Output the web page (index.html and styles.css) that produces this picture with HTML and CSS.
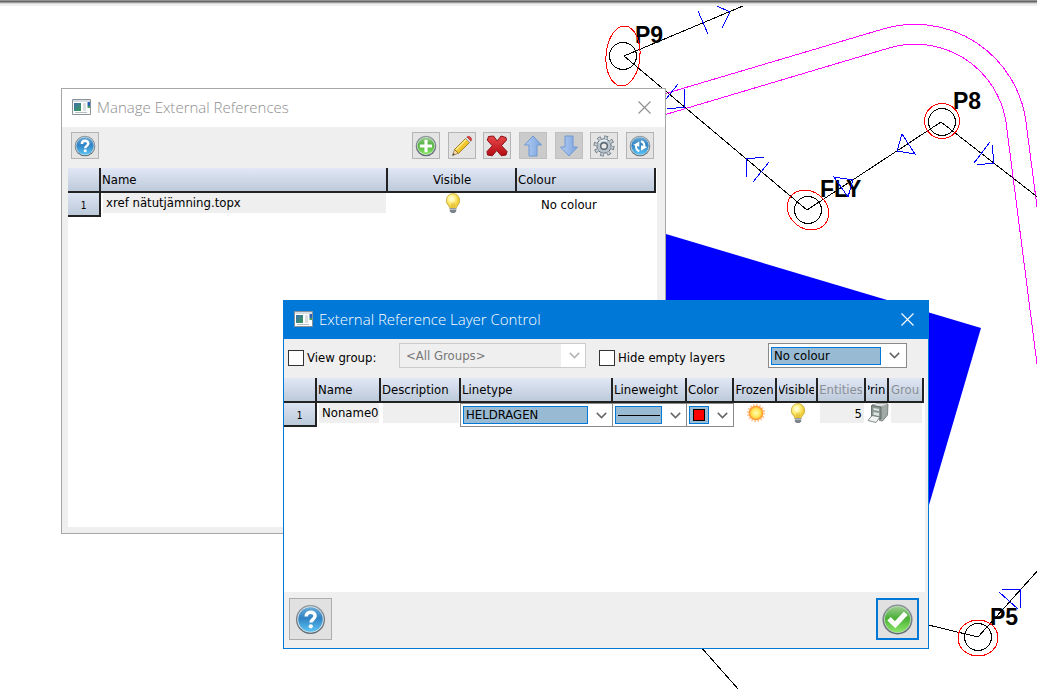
FILE: index.html
```html
<!DOCTYPE html>
<html lang="en">
<head>
<meta charset="utf-8">
<title>External references</title>
<link rel="stylesheet" href="styles.css">
</head>
<body>
<svg class="defs" width="0" height="0" aria-hidden="true">
  <defs>
    <linearGradient id="blueBall" x1="0" y1="0" x2="0" y2="1"><stop offset="0" stop-color="#6aaad6"/><stop offset=".45" stop-color="#3083c4"/><stop offset="1" stop-color="#5cc4f4"/></linearGradient>
    <linearGradient id="greenBall" x1="0" y1="0" x2="0" y2="1"><stop offset="0" stop-color="#9acb90"/><stop offset=".45" stop-color="#4bb036"/><stop offset="1" stop-color="#8ae668"/></linearGradient>
    <linearGradient id="rim" x1="0" y1="0" x2="0" y2="1"><stop offset="0" stop-color="#8e979c"/><stop offset="1" stop-color="#5e6970"/></linearGradient>
    <linearGradient id="redX" x1="0" y1="0" x2="0" y2="1"><stop offset="0" stop-color="#e8484a"/><stop offset="1" stop-color="#b40c12"/></linearGradient>
    <linearGradient id="arrow" x1="0" y1="0" x2="1" y2="0"><stop offset="0" stop-color="#b4cdf2"/><stop offset="1" stop-color="#7ba4df"/></linearGradient>
    <radialGradient id="bulbGlow" cx=".4" cy=".35"><stop offset="0" stop-color="#fffff0"/><stop offset=".5" stop-color="#fff38a"/><stop offset="1" stop-color="#f0cf3c"/></radialGradient>
    <radialGradient id="sunGlow"><stop offset="0" stop-color="#fffbb0"/><stop offset=".6" stop-color="#ffe75c"/><stop offset="1" stop-color="#ffb02a"/></radialGradient>
    <linearGradient id="picture" x1="0" y1="0" x2="1" y2="1"><stop offset="0" stop-color="#3c6fb0"/><stop offset="1" stop-color="#3c9a55"/></linearGradient>
    <symbol id="app" viewBox="0 0 19 16">
      <path d="M.5.5h18v15H.5z" fill="#fff" stroke="#8a9298"/><path d="M1 1h17v2H1z" fill="#d7dde2"/>
      <path d="M2 4h7v8H2z" fill="url(#picture)"/><path d="M11 5h3M11 7h3M11 9h3M11 11h3M3 13.5h12" stroke="#b8bec4"/><path d="M15.500 3h2.500v4h-2.500z" fill="#2a62b8"/><path d="M15.500 7h2.500v2h-2.500z" fill="#4aa05a"/>
    </symbol>
    <symbol id="help" viewBox="0 0 32 32">
      <circle cx="16" cy="16" r="15" fill="url(#rim)"/><circle cx="16" cy="16" r="13.600" fill="#d5e2ea"/><circle cx="16" cy="16" r="12.600" fill="url(#blueBall)"/>
      <path d="M11.500 13c0-6 9.200-5.800 9.200-.6 0 3.400-4.300 3.500-4.300 6.800" fill="none" stroke="#fff" stroke-width="3.600"/><circle cx="16.300" cy="23" r="2.200" fill="#fff"/>
    </symbol>
    <symbol id="add" viewBox="0 0 32 32">
      <circle cx="16" cy="16" r="15" fill="url(#rim)"/><circle cx="16" cy="16" r="13" fill="#d4ecce"/><circle cx="16" cy="16" r="12" fill="url(#greenBall)"/><path d="M16 7v18M7 16h18" stroke="#fff" stroke-width="4.500"/>
    </symbol>
    <symbol id="check" viewBox="0 0 32 32">
      <circle cx="16" cy="16" r="15.500" fill="url(#rim)"/><circle cx="16" cy="16" r="13.900" fill="#b9dcae"/><circle cx="16" cy="16" r="13" fill="url(#greenBall)"/><path d="M5.500 17l3.500-3.500 4.300 4.300L22.500 8l4 3.300L13.800 25z" fill="#fff"/>
    </symbol>
    <symbol id="pencil" viewBox="0 0 22 22">
      <path d="M1.500 20.500l2-6 4 3.700z" fill="#f3d9a7" stroke="#8a6d3b" stroke-width=".7"/><path d="M1.500 20.500l.8-2.300 1.500 1.400z" fill="#333"/>
      <path d="M3.500 14.500L14.500 3.500l4 4L7.500 18.400z" fill="#f0c52c" stroke="#8f6c14" stroke-width=".8"/><path d="M5 14.800L15.200 4.600" stroke="#fff09a" stroke-width="1.300"/>
      <path d="M14.500 3.500l1.500-1.500 4 4-1.500 1.500z" fill="#d9dde2" stroke="#8d9096" stroke-width=".6"/><path d="M16 2c2-2.200 6.200 1.700 4 4z" fill="#e0403c" stroke="#a82a26" stroke-width=".6"/>
    </symbol>
    <symbol id="cross" viewBox="0 0 22 22"><path d="M2.500 1.500L7.500 1l3.700 5L15 1l5 1.500.5 2.500-5 5.700 5.500 5.800-1 3.500-4.700.8-4.500-5.300-4.500 5.300-4.800-.8-.5-3.500 5.300-5.700-5-5.600z" fill="url(#redX)" stroke="#8c1015"/></symbol>
    <symbol id="up" viewBox="0 0 22 22"><path d="M11 1l8.500 9H15v11H7V10H2.500z" fill="url(#arrow)" stroke="#6f98d2"/></symbol>
    <symbol id="down" viewBox="0 0 22 22"><path d="M11 21l8.500-9H15V1H7v11H2.500z" fill="url(#arrow)" stroke="#6f98d2"/></symbol>
    <symbol id="gear" viewBox="0 0 22 22">
      <circle cx="11" cy="11" r="8.700" fill="none" stroke="#66727c" stroke-width="3.600" stroke-dasharray="3.500 3.333"/><circle cx="11" cy="11" r="7.200" fill="#b7c3cc" stroke="#66727c"/>
      <circle cx="11" cy="11" r="8.300" fill="none" stroke="#c6d0d8" stroke-width="2.800" stroke-dasharray="2.200 4.319" stroke-dashoffset="-.5"/><circle cx="11" cy="11" r="3.300" fill="#e8e8e8" stroke="#59646d" stroke-width="1.400"/><path d="M6 8q3-4 8-2" fill="none" stroke="#eef3f7" stroke-width="1.500"/>
    </symbol>
    <symbol id="refresh" viewBox="0 0 32 32">
      <circle cx="16" cy="16" r="15" fill="url(#rim)"/><circle cx="16" cy="16" r="13.600" fill="#cfe0ea"/><circle cx="16" cy="16" r="12.600" fill="url(#blueBall)"/>
      <path d="M15 23.500q-6-2-4.500-9" fill="none" stroke="#fff" stroke-width="3"/><path d="M6 14.500L15 9.500V17z" fill="#fff"/><path d="M17.500 9q6 2 4.500 9" fill="none" stroke="#fff" stroke-width="3"/><path d="M26.500 17.500L17.500 23v-8z" fill="#fff"/>
    </symbol>
    <symbol id="bulb" viewBox="0 0 16 20">
      <path d="M8 .6a7 7 0 0 1 4.200 12.400q-.9.900-1 2.500H4.800q-.1-1.600-1-2.500A7 7 0 0 1 8 .6z" fill="url(#bulbGlow)" stroke="#c4a640" stroke-width=".8"/><path d="M7 15V9.500M9 15V9.500" stroke="#d5ae3a" stroke-width=".7"/><path d="M4.800 15h6.400v3.500L9.500 20h-3l-1.700-1.500z" fill="#7b828a"/><path d="M5 16.200h6" stroke="#cfd4d8"/>
    </symbol>
    <symbol id="sun" viewBox="0 0 20 20"><circle cx="10" cy="10" r="8.100" fill="none" stroke="#ffc496" stroke-width="2.200" stroke-dasharray="1.600 1.581"/><circle cx="10" cy="10" r="6.700" fill="url(#sunGlow)" stroke="#ff9a34" stroke-width="1.200"/></symbol>
    <symbol id="printer" viewBox="0 0 22 20">
      <path d="M5 2l7-1.500 9 .5-.5 11-5 6-3-.5V3.500z" fill="#a2aaa8" stroke="#69736f" stroke-width=".8"/><path d="M5 2l8 1.500 7.500-2.500L12 .5z" fill="#dfe4e2"/><path d="M4.500 2.500L14 4v12l-9.500-2z" fill="#8a9691" stroke="#56605c" stroke-width=".8"/>
      <path d="M6.500 5l5.500 1v2l-5.500-1zM6.500 9l5.500 1v3l-5.500-1z" fill="#dbe4e0"/><path d="M1 17.500l4-5 8 1.500-4 5.500z" fill="#eef2f0" stroke="#69736f" stroke-width=".8"/>
    </symbol>
    <symbol id="close" viewBox="0 0 13 13"><path d="M.5.5l12 12M12.500.5l-12 12" stroke="currentColor" stroke-width="1.100" fill="none"/></symbol>
    <symbol id="chevron" viewBox="0 0 11 7"><path d="M.8.900L5.500 5.600 10.200.9" stroke="currentColor" stroke-width="1.500" fill="none"/></symbol>
  </defs>
</svg>

<main class="desktop">
  <svg class="drawing" aria-label="Survey drawing">
    <path class="solid" d="M600 215L666 234 981 328 929 505 900 600H600z"/>
    <g class="road">
      <path d="M600 113L883 29A112 112 0 0 1 1026 122L1040 230"/>
      <path d="M600 134L889 48A92 92 0 0 1 1006 122L1038 372"/>
    </g>
    <g class="label"><text x="635" y="43">P9</text><text x="953" y="109">P8</text><text x="820" y="197">FLY</text><text x="990" y="625">P5</text></g>
    <g class="traverse">
      <path d="M743 6L624 56 807 210 941 122 1040 199M920 623L978 637 1040 568M700 646L739 690"/>
      <circle cx="623" cy="56" r="13.500"/><circle cx="808" cy="210" r="13.500"/><circle cx="942" cy="122" r="13.500"/><circle cx="978" cy="637" r="13.500"/>
    </g>
    <g class="ellipse">
      <ellipse cx="623" cy="56" rx="17" ry="30" transform="rotate(4 623 56)"/><ellipse cx="808" cy="210" rx="22" ry="18.500" transform="rotate(38 808 210)"/><circle cx="942" cy="121" r="17.500"/><ellipse cx="978" cy="638" rx="20" ry="18"/>
    </g>
    <g class="marks">
      <path d="M698 11L708 34M717 6L730 12 722 28M666 99L678 84M684 89L685 107 667 109M747 177L746 159 764 157M753 182L769 162"/>
      <path d="M834 177L853 180 848 197zM902 134L915 154 897 151zM974 163L990 142M992 145L994 163 977 165M1002 590L1020 589 1021 608M999 592L1018 609"/>
    </g>
  </svg>
  <div class="edge"></div>

  <section class="window references" aria-labelledby="t1">
    <header class="titlebar">
      <svg class="app"><use href="#app"/></svg><h2 id="t1">Manage External References</h2>
      <button class="close" aria-label="Close"><svg><use href="#close"/></svg></button>
    </header>
    <div class="toolbar">
      <button class="tool" aria-label="Help"><svg><use href="#help"/></svg></button>
      <div class="tools">
        <button class="tool" aria-label="Add"><svg><use href="#add"/></svg></button>
        <button class="tool" aria-label="Edit"><svg><use href="#pencil"/></svg></button>
        <button class="tool" aria-label="Delete"><svg><use href="#cross"/></svg></button>
        <button class="tool" aria-label="Move up" disabled><svg><use href="#up"/></svg></button>
        <button class="tool" aria-label="Move down" disabled><svg><use href="#down"/></svg></button>
        <button class="tool" aria-label="Settings"><svg><use href="#gear"/></svg></button>
        <button class="tool" aria-label="Refresh"><svg><use href="#refresh"/></svg></button>
      </div>
    </div>
    <div class="sheet">
      <table class="grid">
        <colgroup><col class="w33"><col><col class="w129"><col class="w139"></colgroup>
        <thead><tr><th></th><th>Name</th><th class="center">Visible</th><th>Colour</th></tr></thead>
        <tbody><tr><th scope="row">1</th><td class="filled"><span class="value">xref nätutjämning.topx</span></td><td class="center"><svg class="bulb" role="img" aria-label="Visible"><use href="#bulb"/></svg></td><td><span class="indent">No colour</span></td></tr></tbody>
      </table>
    </div>
  </section>

  <section class="window layers" aria-labelledby="t2">
    <header class="titlebar">
      <svg class="app"><use href="#app"/></svg><h2 id="t2">External Reference Layer Control</h2>
      <button class="close" aria-label="Close"><svg><use href="#close"/></svg></button>
    </header>
    <div class="filters">
      <label class="tick view"><input type="checkbox">View group:</label>
      <span class="combo off groups"><select aria-label="Group" disabled><option>&lt;All Groups&gt;</option></select><svg class="chevron"><use href="#chevron"/></svg></span>
      <label class="tick"><input type="checkbox">Hide empty layers</label>
      <span class="combo colour"><select aria-label="Colour"><option>No colour</option></select><svg class="chevron"><use href="#chevron"/></svg></span>
    </div>
    <div class="sheet">
      <table class="grid">
        <colgroup><col class="w33"><col class="w64"><col class="w80"><col><col class="w74"><col class="w47"><col class="w43"><col class="w41"><col class="w48"><col class="w23"><col class="w35"></colgroup>
        <thead><tr><th></th><th>Name</th><th>Description</th><th>Linetype</th><th>Lineweight</th><th>Color</th>
          <th class="clip"><span>Frozen</span></th><th class="clip"><span>Visible</span></th><th class="clip dim"><span>Entities</span></th><th class="clip"><span>Print</span></th><th class="clip dim start"><span>Group</span></th></tr></thead>
        <tbody><tr><th scope="row">1</th><td class="filled"><span class="value">Noname0</span></td><td class="filled"><span class="value"></span></td>
          <td><span class="combo"><select aria-label="Linetype"><option>HELDRAGEN</option></select><svg class="chevron"><use href="#chevron"/></svg></span></td>
          <td><span class="combo"><select class="weight" aria-label="Lineweight"><option></option></select><svg class="chevron"><use href="#chevron"/></svg></span></td>
          <td><span class="combo"><select class="swatch" aria-label="Color"><option></option></select><svg class="chevron"><use href="#chevron"/></svg></span></td>
          <td class="center"><svg class="sun" role="img" aria-label="Not frozen"><use href="#sun"/></svg></td>
          <td class="center"><svg class="bulb" role="img" aria-label="Visible"><use href="#bulb"/></svg></td>
          <td class="filled"><span class="value number">5</span></td>
          <td class="center"><svg class="printer" role="img" aria-label="Printed"><use href="#printer"/></svg></td>
          <td class="filled"><span class="value"></span></td></tr></tbody>
      </table>
    </div>
    <footer class="actions">
      <button class="large" aria-label="Help"><svg><use href="#help"/></svg></button>
      <button class="large default" aria-label="OK"><svg><use href="#check"/></svg></button>
    </footer>
  </section>
</main>
</body>
</html>
```
FILE: styles.css
```css
* { box-sizing: border-box; }
body { margin: 0; background: #fff; color: #000; font: 13px/16px "DejaVu Sans Condensed", "Noto Sans", sans-serif; }
.defs { position: absolute; }
.desktop { position: relative; height: 100vh; overflow: hidden; }
.drawing { position: absolute; inset: 0; width: 100%; height: 100%; fill: none; shape-rendering: crispEdges; }
.solid { fill: #00f; shape-rendering: auto; }
.road { stroke: #f0f; }
.traverse { stroke: #000; }
.ellipse { stroke: #f00; }
.marks { stroke: #00f; }
.label { fill: #000; font: bold 23px "Liberation Sans", sans-serif; }
.edge { position: relative; height: 6px; background: linear-gradient(#929292 1px, #666 1px 2px, #9c9c9c 2px 3px, #d6d6d6 3px 4px, #f0f0f0 4px); }

.window { position: absolute; display: flex; flex-direction: column; background: #efefef; border: 1px solid #a6a6a6; }
.references { left: 61px; top: 88px; width: 605px; height: 446px; }
.layers { left: 283px; top: 300px; width: 646px; height: 349px; border-color: #0078d7; }
.titlebar { display: flex; align-items: center; height: 38px; padding: 0 14px 2px 10px; gap: 6px; background: #fff; color: #8e8e8e; }
.layers .titlebar { background: #0078d7; color: #fff; }
.titlebar h2 { flex: 1; margin: 0; font: 300 15px/20px "Open Sans", "Noto Sans", sans-serif; }
.app { width: 19px; height: 16px; }
button { padding: 0; border: 0; background: none; color: inherit; font: inherit; }
.close, .close svg { display: block; width: 13px; height: 13px; }

.toolbar { display: flex; justify-content: space-between; padding: 5px 11px 9px 9px; }
.tools { display: flex; justify-content: space-between; width: 242px; }
.tool { display: grid; place-items: center; width: 28px; height: 27px; background: #e4e4e4; border: 1px solid #b4b4b4; }
.tool:disabled { background: #cbcbcb; border-color: #c0c0c0; }
.tool svg { width: 22px; height: 22px; }
.sheet { flex: 1; background: #fff; }
.references .sheet { margin: 0 8px 6px 6px; }
.layers .sheet { padding-right: 1px; margin-right: 3px; }

.grid { width: 100%; table-layout: fixed; border-collapse: separate; border-spacing: 0; }
.references .grid { width: 588px; }
.w33 { width: 33px; } .w129 { width: 129px; } .w139 { width: 139px; } .w64 { width: 64px; } .w80 { width: 80px; }
.w74 { width: 74px; } .w47 { width: 47px; } .w43 { width: 43px; } .w41 { width: 41px; } .w48 { width: 48px; } .w23 { width: 23px; } .w35 { width: 35px; }
.grid th, .grid td { padding: 0; text-align: left; font-weight: 400; white-space: nowrap; }
.grid thead th { height: 25px; padding-left: 1px; background: linear-gradient(#e2e7f5, #bccada); border-right: 2px solid #222; border-bottom: 2px solid #222; overflow: hidden; }
.grid tbody th { height: 24px; padding-top: 4px; text-align: center; font-size: 10px; background: linear-gradient(#dde3f1, #bccada); border-right: 2px solid #222; border-bottom: 2px solid #222; }
.grid .center { text-align: center; vertical-align: top; }
.grid thead .center { vertical-align: middle; }
.grid thead .clip { padding: 0 2px; }
.clip span { display: flex; justify-content: center; overflow: hidden; }
.start span { justify-content: flex-start; }
.grid .dim { color: #8a8f96; }
.grid td svg { display: block; margin: 0 auto; }
.grid td.filled { vertical-align: top; }
.value { display: block; height: 20px; margin: 0 2px; padding-left: 3px; line-height: 20px; background: #efefef; }
.number { text-align: right; padding: 1px 2px 0 0; }
.indent { padding-left: 24px; }
.bulb { width: 16px; height: 20px; }
.sun { width: 20px; height: 20px; }
.grid .printer { width: 22px; height: 20px; }

.combo { display: flex; align-items: center; height: 25px; padding: 2px 6px 2px 2px; gap: 8px; background: #fff; border: 1px solid #8a8a8a; color: #666; }
.grid .combo { height: 24px; padding-right: 5px; margin-left: -1px; }
.combo select { flex: 1; min-width: 0; height: 18px; padding: 0 2px; appearance: none; border: 1px solid #0078d7; border-radius: 0; background: #99bad3; color: #000; font: inherit; }
.grid .combo .chevron, .combo .chevron { flex: none; width: 11px; height: 7px; margin: 0; }
.combo.off { padding: 0 5px 0 0; border-color: #ccc; color: #b4b4b4; }
.combo.off select { height: 23px; padding-left: 6px; border: 0; background: #efefef; color: #777; opacity: 1; }
.combo .weight { background: linear-gradient(#000, #000) center / 42px 1px no-repeat #99bad3; }
.combo .swatch { background: linear-gradient(#f00, #f00) center / 10px 10px no-repeat, linear-gradient(#000, #000) center / 12px 12px no-repeat #99bad3; }

.filters { display: flex; align-items: center; height: 39px; padding: 0 21px 6px 4px; }
.tick { display: flex; align-items: center; gap: 3px; padding-top: 4px; }
.view { width: 111px; }
.tick input { appearance: none; width: 16px; height: 16px; margin: 0; background: #fff; border: 1px solid #333; }
.groups { width: 187px; margin-right: 13px; }
.colour { width: 139px; margin-left: auto; }

.actions { display: flex; justify-content: space-between; padding: 6px 9px 8px 5px; }
.large { display: grid; place-items: center; width: 43px; height: 42px; background: #e1e1e1; border: 1px solid #adadad; }
.large svg { width: 31px; height: 31px; }
.default { border: 2px solid #0078d7; }
```
